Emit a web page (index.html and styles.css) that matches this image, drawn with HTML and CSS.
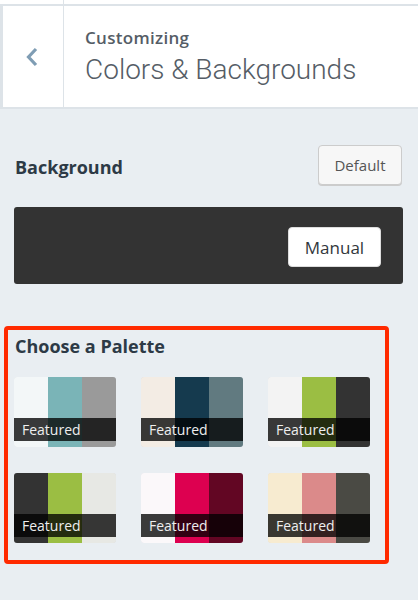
FILE: index.html
```html
<!DOCTYPE html>
<html>
<head>
<meta charset="utf-8">
<link rel="stylesheet" href="styles.css">
</head>
<body>
<div class="top"><div class="top-cell"></div></div>
<div class="header">
  <div class="back">
    <svg width="14" height="20" viewBox="0 0 14 20"><path d="M11 2 L3.5 10 L11 18" fill="none" stroke="#7f9db4" stroke-width="3.2" stroke-linecap="butt" stroke-linejoin="miter"/></svg>
  </div>
  <div class="titles">
    <div class="action">Customizing</div>
    <div class="title">Colors &amp; Backgrounds</div>
  </div>
</div>
<div class="content">
  <div class="bg-row">
    <h2 class="heading">Background</h2>
    <button class="btn btn-default">Default</button>
  </div>
  <div class="dark-box">
    <button class="btn btn-manual">Manual</button>
  </div>
  <div class="palette-box">
    <h2 class="heading palette-heading">Choose a Palette</h2>
    <div class="palettes">
      <div class="palette"><span style="background:#f3f7f8"></span><span style="background:#7ab4b7"></span><span style="background:#9a9a9a"></span><div class="label">Featured</div></div>
      <div class="palette"><span style="background:#f3ece4"></span><span style="background:#153a4e"></span><span style="background:#617a80"></span><div class="label">Featured</div></div>
      <div class="palette"><span style="background:#f3f3f3"></span><span style="background:#9bbe43"></span><span style="background:#333333"></span><div class="label">Featured</div></div>
      <div class="palette"><span style="background:#333333"></span><span style="background:#9bbe43"></span><span style="background:#e7e8e4"></span><div class="label">Featured</div></div>
      <div class="palette"><span style="background:#fbf8fa"></span><span style="background:#dd0050"></span><span style="background:#620623"></span><div class="label">Featured</div></div>
      <div class="palette"><span style="background:#f7ebd0"></span><span style="background:#db8a8a"></span><span style="background:#4a4a44"></span><div class="label">Featured</div></div>
    </div>
  </div>
</div>
</body>
</html>
```
FILE: styles.css
```css
* { box-sizing: border-box; }
html, body { margin: 0; padding: 0; }
body {
  background: #e9eef2;
  font-family: "Open Sans", "Liberation Sans", sans-serif;
  width: 418px;
  height: 600px;
  overflow: hidden;
}
.top {
  height: 4px;
  background: #fff;
}
.top-cell {
  width: 64px;
  height: 4px;
  border-right: 1px solid #dde3e8;
}
.header {
  display: flex;
  height: 105px;
  background: #fff;
  border-top: 2px solid #dde3e8;
  border-bottom: 2px solid #dde3e8;
  border-left: 3px solid #dde3e8;
}
.back {
  width: 61px;
  border-right: 1px solid #dde3e8;
  display: flex;
  align-items: center;
  justify-content: center;
  padding-right: 2px;
}
.titles {
  padding-left: 21px;
  padding-top: 20px;
  color: #555d66;
}
.action {
  font-family: "Open Sans", Roboto, sans-serif;
  font-size: 17px;
  font-weight: 600;
  letter-spacing: 0.3px;
  line-height: 23px;
}
.title {
  font-family: Roboto, "Open Sans", sans-serif;
  font-size: 28px;
  font-weight: 300;
  line-height: 34px;
  margin-top: 4px;
}
.content {
  padding: 0 15px 0 14px;
}
.bg-row {
  display: flex;
  justify-content: space-between;
  align-items: center;
  margin-top: 36px;
  height: 40px;
  padding-right: 1px;
}
.heading {
  margin: 0;
  font-family: "Open Sans", "Liberation Sans", sans-serif;
  font-size: 18px;
  font-weight: bold;
  color: #2d3a46;
  line-height: 22px;
}
.bg-row .heading { margin-top: 3px; margin-left: 1px; }
.btn {
  font-family: "Open Sans", "Liberation Sans", sans-serif;
  border-radius: 4px;
  cursor: pointer;
  padding: 0;
}
.btn-default {
  width: 84px;
  height: 40px;
  background: #f7f7f7;
  border: 1px solid #cccccc;
  box-shadow: 0 1px 0 #cccccc;
  color: #555555;
  font-size: 15px;
}
.dark-box {
  margin-top: 22px;
  height: 77px;
  background: #333333;
  border-radius: 3px;
  display: flex;
  justify-content: flex-end;
  align-items: flex-start;
  padding: 20px 22px 0 0;
}
.btn-manual {
  width: 93px;
  height: 40px;
  background: #ffffff;
  border: 1px solid #dddddd;
  color: #32373c;
  font-size: 17px;
}
.palette-box {
  margin: 42px 0 0 -10px;
  width: 385px;
  height: 238px;
  border: 4px solid #ff2a00;
  border-radius: 4px;
  padding: 4px 0 0 6px;
}
.palette-heading {
  margin-left: 1px;
  line-height: 24px;
}
.palettes {
  display: grid;
  grid-template-columns: repeat(3, 102px);
  column-gap: 25px;
  row-gap: 26px;
  margin-top: 19px;
}
.palette {
  position: relative;
  display: flex;
  height: 70px;
  border-radius: 3px;
  overflow: hidden;
  box-shadow: inset 0 0 0 1px rgba(0,0,0,0.08);
}
.palette span {
  flex: 1;
}
.label {
  position: absolute;
  left: 0;
  right: 0;
  top: 41px;
  height: 23px;
  background: rgba(0,0,0,0.77);
  color: #eeeeee;
  font-family: "Open Sans", "Liberation Sans", sans-serif;
  font-size: 14px;
  line-height: 23px;
  padding-left: 8px;
}
```
